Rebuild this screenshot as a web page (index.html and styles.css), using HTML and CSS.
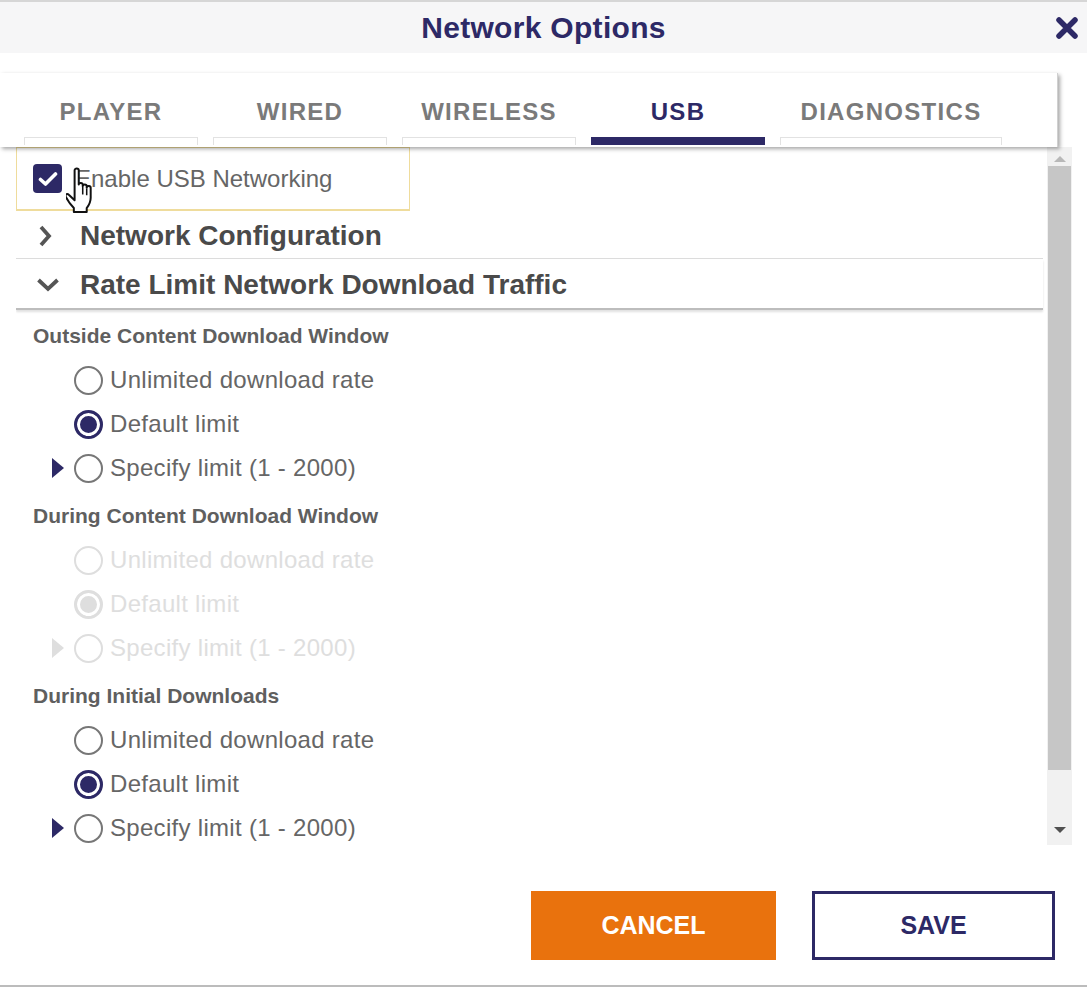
FILE: index.html
```html
<!DOCTYPE html>
<html>
<head>
<meta charset="utf-8">
<link rel="stylesheet" href="styles.css">
</head>
<body>
<div class="dialog">
  <div class="header">
    <h1 class="title">Network Options</h1>
    <button class="close" aria-label="Close">
      <svg width="22" height="22" viewBox="0 0 22 22"><path d="M3 3 L19 19 M19 3 L3 19" stroke="#2d2966" stroke-width="5.5" stroke-linecap="round"/></svg>
    </button>
  </div>

  <div class="tabcard">
    <div class="tabs">
      <div class="tab"><span class="tab-label">PLAYER</span><span class="tab-bar"></span></div>
      <div class="tab"><span class="tab-label">WIRED</span><span class="tab-bar"></span></div>
      <div class="tab"><span class="tab-label">WIRELESS</span><span class="tab-bar"></span></div>
      <div class="tab active"><span class="tab-label">USB</span><span class="tab-bar"></span></div>
      <div class="tab wide"><span class="tab-label">DIAGNOSTICS</span><span class="tab-bar"></span></div>
    </div>
  </div>

  <div class="panel">
    <div class="content">
      <div class="check-row">
        <span class="checkbox">
          <svg width="20" height="16" viewBox="0 0 20 16"><path d="M2.5 8.5 L7.5 13 L17.5 3" fill="none" stroke="#fff" stroke-width="3.6" stroke-linecap="round" stroke-linejoin="round"/></svg>
        </span>
        <span class="check-label">Enable USB Networking</span>
        <svg class="cursor" width="31" height="49" viewBox="0 0 20 32"><path d="M5.5 2.2c0-1.6 2.7-1.6 2.7 0v9.3c0-1.4 2.6-1.4 2.6 0v1c0-1.4 2.6-1.4 2.6 0v1c0-1.4 2.6-1.4 2.6 0v6.5c0 3.2-1.4 5.2-2.6 6.8v2.6h-8.4v-2.6c-1.6-1.6-4.2-5.2-5.3-7.4-.7-1.3.9-2.4 2-1.3l3.8 3.6z" fill="#fff" stroke="#111" stroke-width="1.3" stroke-linejoin="round"/><path d="M10.8 13v5 M13.4 14v4.5" stroke="#111" stroke-width="1" fill="none"/></svg>
      </div>

      <div class="acc-row">
        <svg class="chev" width="22" height="24" viewBox="0 0 22 24"><path d="M4 3 L12 12 L4 21" fill="none" stroke="#555" stroke-width="3.8"/></svg>
        <span class="acc-title">Network Configuration</span>
      </div>
      <div class="acc-row open">
        <svg class="chev" width="22" height="16" viewBox="0 0 22 16"><path d="M1.5 3 L11 12 L20.5 3" fill="none" stroke="#555" stroke-width="3.8"/></svg>
        <span class="acc-title">Rate Limit Network Download Traffic</span>
      </div>

      <div class="group">
        <div class="group-label">Outside Content Download Window</div>
        <div class="opt"><span class="tri"></span><span class="radio"></span><span class="opt-label">Unlimited download rate</span></div>
        <div class="opt"><span class="tri"></span><span class="radio on"></span><span class="opt-label">Default limit</span></div>
        <div class="opt"><span class="tri show"></span><span class="radio"></span><span class="opt-label">Specify limit (1 - 2000)</span></div>
      </div>

      <div class="group disabled">
        <div class="group-label">During Content Download Window</div>
        <div class="opt"><span class="tri"></span><span class="radio"></span><span class="opt-label">Unlimited download rate</span></div>
        <div class="opt"><span class="tri"></span><span class="radio on"></span><span class="opt-label">Default limit</span></div>
        <div class="opt"><span class="tri show"></span><span class="radio"></span><span class="opt-label">Specify limit (1 - 2000)</span></div>
      </div>

      <div class="group">
        <div class="group-label">During Initial Downloads</div>
        <div class="opt"><span class="tri"></span><span class="radio"></span><span class="opt-label">Unlimited download rate</span></div>
        <div class="opt"><span class="tri"></span><span class="radio on"></span><span class="opt-label">Default limit</span></div>
        <div class="opt"><span class="tri show"></span><span class="radio"></span><span class="opt-label">Specify limit (1 - 2000)</span></div>
      </div>
    </div>

    <div class="scrollbar">
      <span class="arrow up"></span>
      <span class="thumb"></span>
      <span class="arrow down"></span>
    </div>
  </div>

  <div class="footer">
    <button class="btn cancel">CANCEL</button>
    <button class="btn save">SAVE</button>
  </div>
</div>
</body>
</html>
```

FILE: styles.css
```css
* { box-sizing: border-box; }

html, body {
  margin: 0;
  padding: 0;
  background: #ffffff;
}

body {
  font-family: "Liberation Sans", Arial, sans-serif;
  width: 1087px;
  height: 989px;
  overflow: hidden;
}

.dialog {
  display: flex;
  flex-direction: column;
  width: 1087px;
}

.header {
  position: relative;
  height: 53px;
  background: #f6f6f7;
  border-top: 2px solid #d6d6d6;
  display: flex;
  align-items: center;
  justify-content: center;
}

.title {
  margin: 0;
  font-size: 30px;
  font-weight: bold;
  color: #2d2966;
  letter-spacing: 0.3px;
}

.close {
  position: absolute;
  right: 9px;
  top: 15px;
  width: 22px;
  height: 22px;
  padding: 0;
  border: none;
  background: none;
  display: flex;
}

.tabcard {
  margin-top: 20px;
  width: 1058px;
  height: 74px;
  background: #fff;
  box-shadow: 2px 2px 4px rgba(0, 0, 0, 0.35);
  border-right: 1px solid #d0d0d0;
  position: relative;
  z-index: 1;
}

.tabs {
  display: flex;
  gap: 15px;
  padding-left: 24px;
  height: 100%;
}

.tab {
  width: 174px;
  display: flex;
  flex-direction: column;
  align-items: stretch;
}

.tab.wide { width: 222px; }

.tab-label {
  height: 64px;
  padding-top: 27px;
  text-align: center;
  font-size: 24px;
  font-weight: bold;
  letter-spacing: 1.3px;
  color: #7a7a7a;
  line-height: 24px;
}

.tab-bar {
  height: 8px;
  border: 1px solid #e2e2e2;
  border-bottom: none;
}

.tab.active .tab-label { color: #2d2966; }
.tab.active .tab-bar {
  background: #2d2966;
  border-color: #2d2966;
}

.panel {
  display: flex;
  margin-left: 16px;
  width: 1056px;
  height: 698px;
  overflow: hidden;
}

.content {
  flex: 1;
  padding-right: 4px;
}

.check-row {
  position: relative;
  width: 394px;
  height: 64px;
  border: 1px solid #efdc9c;
  border-bottom-width: 2px;
  display: flex;
  align-items: center;
  padding-left: 16px;
}

.checkbox {
  width: 29px;
  height: 29px;
  border-radius: 4px;
  background: #2d2966;
  display: flex;
  align-items: center;
  justify-content: center;
}

.check-label {
  margin-left: 13px;
  font-size: 24px;
  color: #666;
}

.cursor {
  position: absolute;
  left: 49px;
  top: 19px;
}

.acc-row {
  height: 48px;
  display: flex;
  align-items: center;
  padding-left: 21px;
  border-bottom: 1px solid #dcdcdc;
  padding-top: 2px;
}

.acc-row.open {
  height: 51px;
  border-bottom: 2px solid #bdbdbd;
  box-shadow: 0 2px 2px rgba(0, 0, 0, 0.12);
}

.chev {
  flex: none;
}

.acc-title {
  margin-left: 21px;
  font-size: 28px;
  font-weight: bold;
  color: #4a4a4a;
}

.group {
  margin-top: 4px;
}

.group-label {
  height: 44px;
  display: flex;
  align-items: center;
  padding-left: 17px;
  font-size: 21px;
  font-weight: bold;
  color: #5f5f5f;
}

.opt {
  height: 44px;
  display: flex;
  align-items: center;
  padding-left: 36px;
}

.tri {
  width: 12px;
  height: 20px;
  margin-right: 10px;
}

.tri.show {
  border-left: 12px solid #2d2966;
  border-top: 10px solid transparent;
  border-bottom: 10px solid transparent;
}

.radio {
  width: 29px;
  height: 29px;
  border-radius: 50%;
  border: 2px solid #777;
  background: #fff;
  margin-right: 7px;
  flex: none;
}

.radio.on {
  border: 3px solid #2d2966;
  background: #2d2966;
  box-shadow: inset 0 0 0 3px #fff;
}

.opt-label {
  font-size: 24px;
  letter-spacing: 0.3px;
  color: #666;
}

.disabled .opt-label { color: #dedede; }
.disabled .radio { border-color: #dedede; }
.disabled .radio.on { background: #dedede; border-color: #dedede; }
.disabled .tri.show { border-left-color: #dedede; }

.scrollbar {
  width: 25px;
  background: #f1f1f1;
  display: flex;
  flex-direction: column;
  align-items: center;
  padding: 9px 0 12px;
}

.arrow {
  width: 0;
  height: 0;
  border-left: 6px solid transparent;
  border-right: 6px solid transparent;
}

.arrow.up {
  border-bottom: 6px solid #b8b8b8;
}

.arrow.down {
  border-top: 6px solid #505050;
}

.thumb {
  width: 23px;
  margin: 4px 0 auto;
  height: 604px;
  background: #c6c6c6;
}

.footer {
  height: 142px;
  border-bottom: 2px solid #bcbcbc;
  display: flex;
  justify-content: flex-end;
  align-items: flex-start;
  gap: 36px;
  padding: 46px 32px 0 0;
}

.btn {
  font-family: "Liberation Sans", Arial, sans-serif;
  font-size: 25px;
  font-weight: bold;
  height: 69px;
  cursor: pointer;
}

.cancel {
  width: 245px;
  background: #e9720d;
  color: #fff;
  border: none;
}

.save {
  width: 243px;
  background: #fff;
  color: #2d2966;
  border: 3px solid #2d2966;
}
```
